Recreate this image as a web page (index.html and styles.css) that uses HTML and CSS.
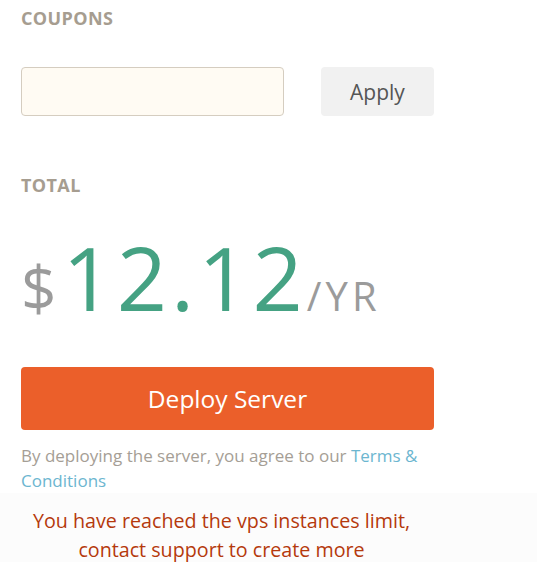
FILE: index.html
```html
<!DOCTYPE html>
<html>
<head>
<meta charset="utf-8">
<link rel="stylesheet" href="styles.css">
</head>
<body>
<div class="panel">
  <section class="coupons">
    <h3 class="label">COUPONS</h3>
    <div class="coupon-row">
      <input class="coupon-input" type="text">
      <button class="apply-btn">Apply</button>
    </div>
  </section>
  <section class="total">
    <h3 class="label">TOTAL</h3>
    <div class="price">
      <span class="currency">$</span><span class="amount">12.12</span><span class="period">/YR</span>
    </div>
  </section>
  <button class="deploy-btn">Deploy Server</button>
  <p class="terms">By deploying the server, you agree to our <a href="#">Terms &amp; Conditions</a></p>
</div>
<div class="limit">
  <p class="limit-msg">You have reached the vps instances limit,<br>contact support to create more</p>
</div>
</body>
</html>
```

FILE: styles.css
```css
html, body {
  margin: 0;
  padding: 0;
  background: #ffffff;
  font-family: "Open Sans", "Noto Sans", sans-serif;
}
.panel {
  width: 413px;
  padding: 0 0 0 21px;
}
.label {
  margin: 0;
  padding-top: 7px;
  font-size: 18px;
  line-height: 22px;
  font-weight: 700;
  color: #a69d90;
  letter-spacing: 0.4px;
}
.coupon-row {
  display: flex;
  justify-content: space-between;
  margin-top: 38px;
}
.coupon-input {
  box-sizing: border-box;
  width: 263px;
  height: 49px;
  border: 1px solid #d5cdc0;
  border-radius: 4px;
  background: #fffbf3;
  margin: 0;
}
.apply-btn {
  width: 113px;
  height: 49px;
  border: none;
  border-radius: 4px;
  background: #f1f1f1;
  color: #555555;
  font-family: inherit;
  font-size: 21px;
  padding: 0;
}
.total .label {
  margin-top: 51px;
}
.price {
  margin-top: 37px;
  height: 100px;
  display: flex;
  align-items: baseline;
  line-height: 1;
}
.currency {
  font-size: 62px;
  color: #9b9b9b;
  margin-right: 6px;
}
.amount {
  font-size: 88px;
  font-weight: 500;
  color: #45a283;
  letter-spacing: 4px;
}
.period {
  font-size: 40px;
  color: #9b9b9b;
  margin-left: 0;
  letter-spacing: 4px;
}
.deploy-btn {
  display: block;
  width: 413px;
  height: 63px;
  margin-top: 34px;
  border: none;
  border-radius: 4px;
  background: #eb5f2a;
  color: #ffffff;
  font-family: inherit;
  font-size: 24.5px;
  padding: 0;
}
.terms {
  margin: 13px 0 0 0;
  font-size: 17px;
  line-height: 25px;
  color: #a59e95;
}
.terms a {
  color: #6cb6d0;
  text-decoration: none;
}
.limit {
  padding: 13px 0 0 9px;
  background: #fcfcfc;
}
.limit-msg {
  width: 425px;
  margin: 0;
  text-align: center;
  font-size: 19.7px;
  line-height: 29px;
  color: #b5390c;
}
```
